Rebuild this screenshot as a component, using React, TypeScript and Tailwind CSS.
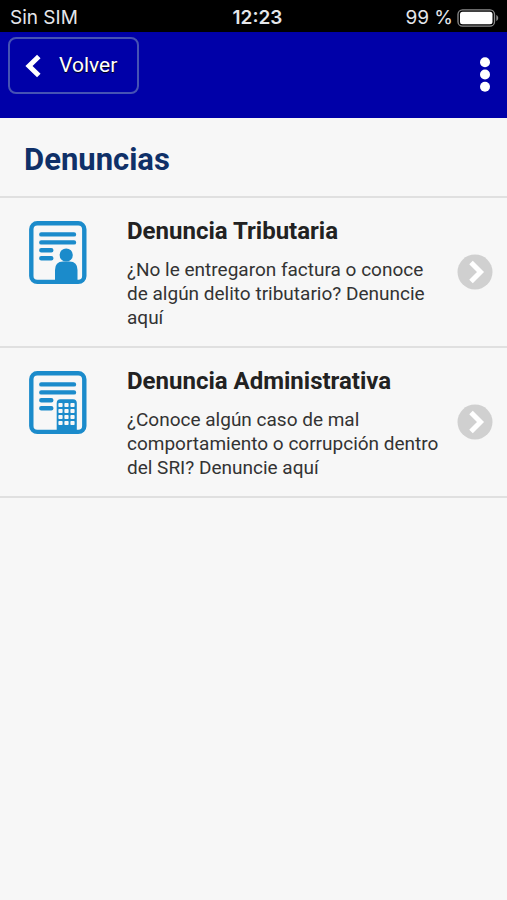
import type { ReactNode } from "react";

interface Complaint {
  href: string;
  title: string;
  description: string;
  icon: ReactNode;
}

function DocumentIcon({ children }: { children: ReactNode }) {
  return (
    <svg className="h-16 w-[58px] shrink-0" viewBox="0 0 58 64" fill="none" aria-hidden="true">
      <rect x="2.3" y="2.3" width="53" height="58.6" rx="6" stroke="#1b8bcb" strokeWidth="4.4" />
      <g stroke="#1b8bcb" strokeWidth="4.4" strokeLinecap="round">
        <path d="M12.3 13.4H45M12.3 21.4H45M12.3 29.3H22.3M12.3 37.2H22.3" />
      </g>
      {children}
    </svg>
  );
}

function PersonDocumentIcon() {
  return (
    <DocumentIcon>
      <circle cx="37.2" cy="34" r="6.6" fill="#1b8bcb" />
      <path d="M26 61V49Q26 40.5 34 40.5H40.5Q48.5 40.5 48.5 49V61Z" fill="#1b8bcb" />
    </DocumentIcon>
  );
}

function BuildingDocumentIcon() {
  const columns = [31.5, 37.5, 43.5];
  const rows = [34, 40, 46, 52];

  return (
    <DocumentIcon>
      <path d="M27.7 61V32Q27.7 28.2 31.5 28.2H44Q47.8 28.2 47.8 32V61Z" fill="#1b8bcb" />
      {rows.map((y) =>
        columns.map((x) => (
          <rect key={`${x}-${y}`} x={x - 2.1} y={y - 2.1} width="4.2" height="4.2" rx="0.8" fill="#f7f7f7" />
        ))
      )}
    </DocumentIcon>
  );
}

const complaints: Complaint[] = [
  {
    href: "#tributaria",
    title: "Denuncia Tributaria",
    description: "¿No le entregaron factura o conoce de algún delito tributario? Denuncie aquí",
    icon: <PersonDocumentIcon />,
  },
  {
    href: "#administrativa",
    title: "Denuncia Administrativa",
    description: "¿Conoce algún caso de mal comportamiento o corrupción dentro del SRI? Denuncie aquí",
    icon: <BuildingDocumentIcon />,
  },
];

function StatusBar() {
  return (
    <div className="grid h-8 grid-cols-3 items-center bg-black pt-1 pr-2 pl-[10px] font-[Inter,sans-serif] text-[19px] leading-7 text-gray-200">
      <span>Sin SIM</span>
      <span className="pl-1.5 text-center font-semibold">12:23</span>
      <span className="flex items-center justify-end gap-1 whitespace-nowrap">
        99 %
        <svg className="h-[18px] w-[42px]" viewBox="0 0 42 18" fill="none" aria-hidden="true">
          <rect x="1" y="0.8" width="36.5" height="16.4" rx="4.5" stroke="#8c8c8c" strokeWidth="1.3" />
          <rect x="3" y="2.8" width="32.5" height="12.4" rx="2.5" fill="#fff" />
          <path d="M39.3 6C41.8 7 41.8 11 39.3 12Z" fill="#8c8c8c" />
        </svg>
      </span>
    </div>
  );
}

function Header() {
  return (
    <header className="flex h-[86px] items-start justify-between bg-[#0000a8] px-2 pt-[5px]">
      <button
        type="button"
        className="flex h-[57px] items-center gap-4 rounded-lg border-2 border-[#4652b4] pr-5 pl-[15px] text-[21px] leading-[29px] text-white [text-shadow:0_1px_1px_#000]"
      >
        <svg className="h-6 w-[18px]" viewBox="0 0 18 24" fill="none" aria-hidden="true">
          <path d="M13.8 2.5L4 12L13.8 21.5" stroke="#fff" strokeWidth="5" />
        </svg>
        Volver
      </button>
      <button type="button" aria-label="Menú" className="mt-5 px-2">
        <svg className="h-9 w-3" viewBox="0 0 12 36" fill="#fff" aria-hidden="true">
          <circle cx="6" cy="5.2" r="5" />
          <circle cx="6" cy="17.5" r="5" />
          <circle cx="6" cy="29.8" r="5" />
        </svg>
      </button>
    </header>
  );
}

function ComplaintItem({ item }: { item: Complaint }) {
  return (
    <li className="border-b-2 border-[#e0e0e0]">
      <a href={item.href} className="flex items-center gap-3 pr-[14px] pl-[29px]">
        <div className="flex flex-1 items-start gap-10 pt-[21px] pb-4">
          <div className="pt-[2px]">{item.icon}</div>
          <div className="flex-1">
            <h2 className="text-2xl leading-6 font-bold text-[#222]">{item.title}</h2>
            <p className="mt-[15px] text-[19px] leading-6 text-[#333]">{item.description}</p>
          </div>
        </div>
        <svg className="h-9 w-9 shrink-0" viewBox="0 0 36 36" fill="none" aria-hidden="true">
          <circle cx="18" cy="18" r="17.5" fill="#d0d0d0" />
          <path d="M14 8.5L23.5 18L14 27.5" stroke="#fff" strokeWidth="5" />
        </svg>
      </a>
    </li>
  );
}

export default function App() {
  return (
    <div className="min-h-screen bg-[#f7f7f7] font-[Roboto,sans-serif]">
      <StatusBar />
      <Header />
      <main>
        <h1 className="border-b-2 border-[#e0e0e0] px-6 pt-[22px] pb-4 text-[31px] leading-10 font-bold text-[#0f3068]">
          Denuncias
        </h1>
        <ul>
          {complaints.map((item) => (
            <ComplaintItem key={item.href} item={item} />
          ))}
        </ul>
      </main>
    </div>
  );
}
